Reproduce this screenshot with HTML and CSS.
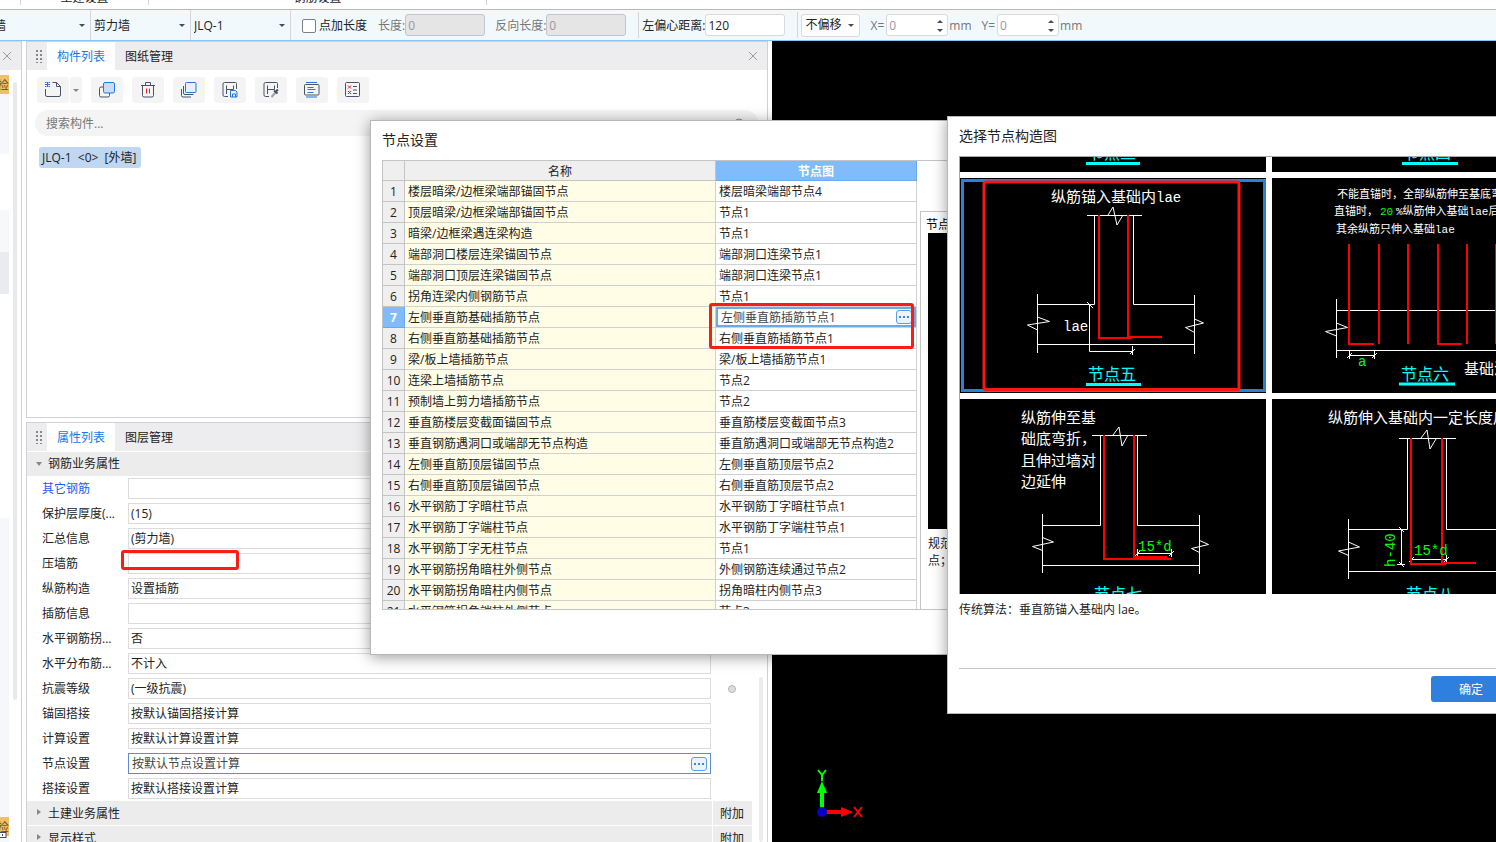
FILE: index.html
```html
<!DOCTYPE html>
<html lang="zh-CN">
<head>
<meta charset="utf-8">
<title>节点设置</title>
<link rel="stylesheet" href="styles.css">
</head>
<body>
<div class="app">
  <nav class="ribbon">
    <div class="ribbon-group ribbon-group-edge"></div>
    <div class="ribbon-group ribbon-group-civil">土建设置</div>
    <div class="ribbon-group ribbon-group-rebar">钢筋设置</div>
  </nav>

  <div class="toolbar">
    <span class="combo"><select aria-label="构件大类"><option>墙</option></select></span>
    <span class="combo"><select aria-label="构件类型"><option>剪力墙</option></select></span>
    <span class="combo"><select aria-label="构件"><option>JLQ-1</option></select></span>
    <label class="tick"><input type="checkbox">点加长度</label>
    <div class="field muted"><label for="len">长度:</label><input id="len" class="num" value="0" disabled></div>
    <div class="field muted"><label for="rlen">反向长度:</label><input id="rlen" class="num" value="0" disabled></div>
    <i class="sep"></i>
    <div class="field"><label for="ecc">左偏心距离:</label><input id="ecc" class="num" value="120"></div>
    <i class="sep"></i>
    <span class="combo combo-box"><select aria-label="偏移方式"><option>不偏移</option></select></span>
    <div class="field muted"><label for="ox">X=</label><span class="spin"><input id="ox" value="0"></span><span>mm</span></div>
    <div class="field muted"><label for="oy">Y=</label><span class="spin"><input id="oy" value="0"></span><span>mm</span></div>
  </div>

  <main class="work">
    <aside class="rail">
      <div class="rail-head"><button class="close" aria-label="关闭"><svg width="10" height="10" viewBox="0 0 10 10"><path d="M1 1l8 8M9 1l-8 8"/></svg></button></div>
      <div class="rail-body">
        <div class="rail-list">
          <div class="rail-top"><span class="badge">检</span></div>
          <div class="rail-gap"></div>
          <div class="rail-row"></div>
          <div class="rail-row rail-row-on"></div>
          <div class="rail-bottom"><span class="badge">检<svg width="8" height="8" viewBox="0 0 8 8"><rect x="-1" y="1.500" width="7" height="5" fill="#fff"/><path d="M2.500 3v2"/></svg></span></div>
        </div>
        <div class="rail-scroll"></div>
      </div>
    </aside>

    <div class="docks">
      <section class="panel">
        <header class="tabs">
          <i class="grip"></i>
          <button class="tab tab-on">构件列表</button>
          <button class="tab">图纸管理</button>
          <button class="close" aria-label="关闭"><svg width="10" height="10" viewBox="0 0 10 10"><path d="M1 1l8 8M9 1l-8 8"/></svg></button>
        </header>
        <div class="tools">
          <div class="split">
            <button class="tool" aria-label="新建"><svg class="ico" viewBox="0 0 18 18"><path d="M8.500 1.500h4l4 4v8.500a1.500 1.500 0 0 1-1.500 1.500H3A1.500 1.500 0 0 1 1.500 14V8M12.500 1.500v4h4"/><path class="blue" d="M1 1.500h1.500M4.500 1.500H6M2.500 3.500h2M1 5.500h1.500M4.500 5.500H6M3.500 1v5M1 3.500h5" stroke-width="1"/></svg></button>
            <button class="tool tool-drop" aria-label="更多新建"></button>
          </div>
          <button class="tool" aria-label="复制"><svg class="ico" viewBox="0 0 18 18"><rect x="1.500" y="6" width="10" height="10" rx="1.500"/><rect class="blue tint" x="5.500" y="1.500" width="11" height="10.500" rx="1.500"/></svg></button>
          <button class="tool" aria-label="删除"><svg class="ico" viewBox="0 0 18 18"><path d="M2 4.500h14M6.500 4.500v-3h5v3M3.500 4.500v10a1.500 1.500 0 0 0 1.500 1.500h8a1.500 1.500 0 0 0 1.500-1.500v-10"/><path class="red" d="M7.500 7.500v5M10.500 7.500v5"/></svg></button>
          <button class="tool" aria-label="层间复制"><svg class="ico" viewBox="0 0 18 18"><path d="M1.500 8v6.500A1.500 1.500 0 0 0 3 16h8M3.500 5v7a1.500 1.500 0 0 0 1.500 1.500h8.500"/><rect class="blue pale" x="5.500" y="1.500" width="10.500" height="10" rx="1"/></svg></button>
          <button class="tool" aria-label="存档"><svg class="ico" viewBox="0 0 18 18"><path d="M7 15.500H3.500A1.500 1.500 0 0 1 2 14V3a1.500 1.500 0 0 1 1.500-1.500h11a1 1 0 0 1 1 1V8M5.500 13V4.500M5.500 8.500h7M12.500 8.500v-4"/><path class="blue pale" d="M9.500 9.500h5l1.500 1.500v5H9.500zM11.500 16v-3h3v3"/></svg></button>
          <button class="tool" aria-label="提取"><svg class="ico" viewBox="0 0 18 18"><path d="M7 15.500H3.500A1.500 1.500 0 0 1 2 14V3a1.500 1.500 0 0 1 1.500-1.500h11a1 1 0 0 1 1 1V7M5.500 13V4.500M5.500 8.500h7M12.500 8.500v-4"/><path d="M9.500 16l4-4.500" stroke-width="2" stroke="#9aa1af"/><path d="M12 9.500l3.500 3M14 10.500l2-2" stroke-width="2"/></svg></button>
          <button class="tool" aria-label="添加前后缀"><svg class="ico" viewBox="0 0 18 18"><rect x="1.500" y="3.500" width="14.500" height="10.500" rx="1"/><path class="blue" d="M3 1.500h11M3 16h11M4.500 6.500h6M4.500 8.500h8M4.500 11.500h6"/></svg></button>
          <button class="tool" aria-label="检查"><svg class="ico" viewBox="0 0 18 18"><rect x="1.500" y="1.500" width="14" height="14" rx="1"/><path d="M9 5.500h4M9 9h4M9 12.500h4"/><path class="red" d="M4 4.500l3 3M7 4.500l-3 3M4 10l3 3M7 10l-3 3"/></svg></button>
        </div>
        <div class="search">
          <input type="search" placeholder="搜索构件..." aria-label="搜索构件">
          <svg class="ico ico-find" viewBox="0 0 18 18"><circle cx="9" cy="9" r="4"/><path d="M12 12l3 3"/></svg>
        </div>
        <ul class="items"><li class="item">JLQ-1  &lt;0&gt;  [外墙]</li></ul>
      </section>

      <section class="panel panel-props">
        <header class="tabs">
          <i class="grip"></i>
          <button class="tab tab-on">属性列表</button>
          <button class="tab">图层管理</button>
        </header>
        <div class="props">
          <button class="group group-full group-open">钢筋业务属性</button>
          <div class="prop prop-link"><label for="p1">其它钢筋</label><input id="p1"></div>
          <div class="prop"><label for="p2">保护层厚度(...</label><input id="p2" value="(15)"></div>
          <div class="prop"><label for="p3">汇总信息</label><input id="p3" value="(剪力墙)"></div>
          <div class="prop"><label for="p4">压墙筋</label><input id="p4"><i class="mark mark-prop"></i></div>
          <div class="prop"><label for="p5">纵筋构造</label><input id="p5" value="设置插筋"></div>
          <div class="prop"><label for="p6">插筋信息</label><input id="p6"></div>
          <div class="prop"><label for="p7">水平钢筋拐...</label><input id="p7" value="否"></div>
          <div class="prop"><label for="p8">水平分布筋...</label><input id="p8" value="不计入"></div>
          <div class="prop"><label for="p9">抗震等级</label><input id="p9" value="(一级抗震)"><input class="dot" type="radio" disabled aria-label="附加抗震等级"></div>
          <div class="prop"><label for="p10">锚固搭接</label><input id="p10" value="按默认锚固搭接计算"></div>
          <div class="prop"><label for="p11">计算设置</label><input id="p11" value="按默认计算设置计算"></div>
          <div class="prop prop-on"><label for="p12">节点设置</label><input id="p12" value="按默认节点设置计算"><button class="more" aria-label="编辑节点设置"></button></div>
          <div class="prop"><label for="p13">搭接设置</label><input id="p13" value="按默认搭接设置计算"></div>
          <div class="group-row"><button class="group">土建业务属性</button><span class="extra">附加</span></div>
          <div class="group-row"><button class="group">显示样式</button><span class="extra">附加</span></div>
          <i class="props-scroll"></i>
        </div>
      </section>
    </div>

    <section class="canvas">
      <svg class="axis" width="56" height="56" viewBox="0 0 56 56">
        <path d="M11 45V24" stroke="#0f0" stroke-width="4"/><path d="M11 14l5 12H6z" fill="#0f0"/>
        <path d="M11 45h20" stroke="red" stroke-width="4"/><path d="M42 45l-12 5V40z" fill="red"/>
        <circle cx="11" cy="45" r="5" fill="#0000c8"/>
        <path d="M7 3l4 5 4-5M11 8v6" stroke="#0f0" stroke-width="2" fill="none"/>
        <path d="M43 40l8 10M51 40l-8 10" stroke="red" stroke-width="2"/>
      </svg>
    </section>
  </main>

  <section class="dialog dialog-nodes" role="dialog" aria-labelledby="t1">
    <h2 class="dialog-title" id="t1">节点设置</h2>
    <div class="nodes">
      <div class="sheet">
        <table class="grid">
          <colgroup><col class="c-no"><col class="c-name"><col class="c-node"></colgroup>
          <thead><tr><th></th><th>名称</th><th class="on">节点图</th></tr></thead>
          <tbody>
            <tr><th>1</th><td>楼层暗梁/边框梁端部锚固节点</td><td>楼层暗梁端部节点4</td></tr>
            <tr><th>2</th><td>顶层暗梁/边框梁端部锚固节点</td><td>节点1</td></tr>
            <tr><th>3</th><td>暗梁/边框梁遇连梁构造</td><td>节点1</td></tr>
            <tr><th>4</th><td>端部洞口楼层连梁锚固节点</td><td>端部洞口连梁节点1</td></tr>
            <tr><th>5</th><td>端部洞口顶层连梁锚固节点</td><td>端部洞口连梁节点1</td></tr>
            <tr><th>6</th><td>拐角连梁内侧钢筋节点</td><td>节点1</td></tr>
            <tr><th class="on">7</th><td>左侧垂直筋基础插筋节点</td><td class="edit"><div class="edit-box"><input value="左侧垂直筋插筋节点1" aria-label="左侧垂直筋基础插筋节点"><button class="more" aria-label="选择节点构造图"></button></div></td></tr>
            <tr><th>8</th><td>右侧垂直筋基础插筋节点</td><td>右侧垂直筋插筋节点1</td></tr>
            <tr><th>9</th><td>梁/板上墙插筋节点</td><td>梁/板上墙插筋节点1</td></tr>
            <tr><th>10</th><td>连梁上墙插筋节点</td><td>节点2</td></tr>
            <tr><th>11</th><td>预制墙上剪力墙插筋节点</td><td>节点2</td></tr>
            <tr><th>12</th><td>垂直筋楼层变截面锚固节点</td><td>垂直筋楼层变截面节点3</td></tr>
            <tr><th>13</th><td>垂直钢筋遇洞口或端部无节点构造</td><td>垂直筋遇洞口或端部无节点构造2</td></tr>
            <tr><th>14</th><td>左侧垂直筋顶层锚固节点</td><td>左侧垂直筋顶层节点2</td></tr>
            <tr><th>15</th><td>右侧垂直筋顶层锚固节点</td><td>右侧垂直筋顶层节点2</td></tr>
            <tr><th>16</th><td>水平钢筋丁字暗柱节点</td><td>水平钢筋丁字暗柱节点1</td></tr>
            <tr><th>17</th><td>水平钢筋丁字端柱节点</td><td>水平钢筋丁字端柱节点1</td></tr>
            <tr><th>18</th><td>水平钢筋丁字无柱节点</td><td>节点1</td></tr>
            <tr><th>19</th><td>水平钢筋拐角暗柱外侧节点</td><td>外侧钢筋连续通过节点2</td></tr>
            <tr><th>20</th><td>水平钢筋拐角暗柱内侧节点</td><td>拐角暗柱内侧节点3</td></tr>
            <tr><th>21</th><td>水平钢筋拐角端柱外侧节点</td><td>节点3</td></tr>
          </tbody>
        </table>
      </div>
      <div class="preview">
        <h3>节点</h3>
        <div class="preview-pic"></div>
        <p>规范<br>点；</p>
      </div>
      <i class="mark mark-nodes"></i>
    </div>
  </section>

  <section class="dialog dialog-pick" role="dialog" aria-labelledby="t2">
    <h2 class="dialog-title" id="t2">选择节点构造图</h2>
    <div class="gallery">
      <svg class="thumb" viewBox="960 -43 306 215" preserveAspectRatio="xMinYMax slice">
        <text class="cap" x="1088" y="159">节点三</text><path class="cap-line" d="M1086 163.500h54"/>
      </svg>
      <svg class="thumb" viewBox="1272 -43 306 215" preserveAspectRatio="xMinYMax slice">
        <text class="cap" x="1403" y="159">节点四</text><path class="cap-line" d="M1402 163.500h56"/>
      </svg>

      <svg class="thumb" viewBox="960 178 306 215">
        <rect x="962.500" y="180.500" width="302" height="210" fill="none" stroke="#2d7fdc" stroke-width="3"/>
        <text class="note" x="1051" y="202">纵筋锚入基础内<tspan class="latin">lae</tspan></text>
        <path class="wall" d="M1087 215.500h55M1094.500 215v89.500h-57M1133.500 215v89.500h61M1037.500 294v59M1194.500 295v59M1037 344.500h157M1089.500 304v47.500h43M1132.500 346v9M1087 302l6 6M1130 354l5-5"/>
        <path class="wall" d="M1108 215l5-8 4 18 6-10M1037.500 317l12 4.500-22 3.500 10 5M1194.500 319l9 4-18 4.500 9 5"/>
        <path class="bar" d="M1099 215v123h33M1128 215v122h34"/>
        <text class="latin" x="1063" y="331">lae</text>
        <text class="cap" x="1088" y="380">节点五</text><path class="cap-line" d="M1086 384.500h55"/>
        <rect x="984" y="182" width="255" height="207.500" rx="2" fill="none" stroke="#f9170f" stroke-width="3"/>
      </svg>

      <svg class="thumb" viewBox="1272 178 306 215">
        <text class="small" x="1337" y="198">不能直锚时，全部纵筋伸至基底弯</text>
        <text class="small" x="1334" y="215">直锚时，</text><text class="small green" x="1380" y="215">20</text>
        <text class="small" x="1396" y="215">%纵筋伸入基础lae后</text>
        <text class="small" x="1336" y="233">其余纵筋只伸入基础lae</text>
        <path class="wall" d="M1336 310.500h242M1336.500 299v59M1336 350.500h242M1349 355.500h26M1349.500 351v8M1374.500 351v8M1347 358l5-5M1372 358l5-5M1336.500 323l11 4.500-22 4 11 4.500"/>
        <path class="bar" d="M1349 244v100h25M1379 244v100M1408 244v100M1438 244v100h24M1467 244v100M1496 244v100"/>
        <text class="latin green" x="1358" y="366">a</text>
        <text class="cap" x="1401" y="380">节点六</text><path class="cap-line" d="M1399 384h56"/>
        <text class="note" x="1464" y="374">基础深</text>
      </svg>

      <svg class="thumb" viewBox="960 399 306 215">
        <text class="note" x="1021" y="423">纵筋伸至基</text><text class="note" x="1021" y="444">础底弯折，</text>
        <text class="note" x="1021" y="466">且伸过墙对</text><text class="note" x="1021" y="487">边延伸</text>
        <path class="wall" d="M1092 435.500h55M1100.500 435v90.500h-58M1137.500 435v90.500h62M1042.500 514v59M1199.500 515v59M1042 565.500h157M1137 553.500h35M1137.500 549v8M1171.500 549v8M1135 556l5-5M1169 556l5-5"/>
        <path class="wall" d="M1113 435l6-8 3 19 6-11M1042.500 537.500l11 4.500-21 4.500 10 4M1199.500 540.500l9 4-17 4 8 4"/>
        <path class="bar" d="M1104 435v124h67M1134 435v122h33"/>
        <text class="latin green" x="1138" y="551">15*d</text>
        <text class="cap" x="1094" y="600">节点七</text>
      </svg>

      <svg class="thumb" viewBox="1272 399 306 215">
        <text class="note" x="1328" y="423">纵筋伸入基础内一定长度后</text>
        <path class="wall" d="M1399 438.500h57M1407.500 438v91.500h-59M1446.500 438v91.500h131M1348.500 519v60M1348 571.500h230M1401.500 529v36M1397 564.500h8M1399 527l5 5M1399 562l5 5M1411 559.500h35M1446.500 555v8M1409 562l5-5M1444 562l5-5"/>
        <path class="wall" d="M1421 438l6-8 3 19 6-10M1348.500 542l11 5-21 4 10 4.500"/>
        <path class="bar" d="M1411 438v126h35M1442 438v125h34"/>
        <text class="latin green" x="1414" y="555">15*d</text>
        <text class="latin green" transform="translate(1395 567) rotate(-90)">h-40</text>
        <text class="cap" x="1406" y="600">节点八</text>
      </svg>
    </div>
    <p class="pick-note">传统算法：垂直筋锚入基础内 lae。</p>
    <footer class="pick-foot"><button class="ok">确定</button></footer>
  </section>
</div>
</body>
</html>
```
FILE: styles.css
```css
* { box-sizing: border-box; }

body {
  margin: 0;
  font: 12px/16px "Open Sans", "Noto Sans CJK SC", sans-serif;
  color: #222;
  background: #fff;
}

button, input, select {
  margin: 0;
  padding: 0;
  border: 0;
  border-radius: 0;
  background: none;
  font: inherit;
  color: inherit;
  appearance: none;
  outline: none;
}

h2, h3, p, ul { margin: 0; padding: 0; font-weight: normal; list-style: none; }

.app {
  position: relative;
  display: flex;
  flex-direction: column;
  height: 100vh;
  overflow: hidden;
}

/* Ribbon */
.ribbon {
  display: flex;
  align-items: flex-end;
  flex: none;
  height: 9px;
  padding-bottom: 4px;
  overflow: hidden;
}
.ribbon-group { height: 16px; line-height: 18px; text-align: center; border-right: 1px solid #d4d6da; }
.ribbon-group-edge { width: 21px; }
.ribbon-group-civil { width: 128px; }
.ribbon-group-rebar { width: 338px; }

/* Toolbar */
.toolbar {
  display: flex;
  align-items: center;
  flex: none;
  height: 32px;
  padding-right: 16px;
  background: #f2f9fd;
  border-top: 1px solid #8cc3f8;
  border-bottom: 1px solid #8cc3f8;
}
.combo { position: relative; flex: none; width: 100px; height: 30px; border-right: 1px solid #d4d6da; }
.combo:first-child { margin-left: -9px; }
.combo select { width: 100%; height: 100%; padding: 2px 0 0 3px; }
.combo::after, .tool-drop::after {
  content: "";
  position: absolute;
  right: 5px;
  top: 14px;
  border: 3px solid transparent;
  border-top-color: #444b5c;
  border-bottom: 0;
}
.combo-box { width: 59px; height: 23px; margin-right: 10px; border: 1px solid #d7dade; border-radius: 3px; background: #fff; }
.combo-box select { padding-top: 0; }
.combo-box::after { top: 9px; }
.tick { display: flex; align-items: center; gap: 3px; margin: 0 11px; flex: none; padding-top: 1px; }
.tick input { width: 14px; height: 14px; border: 1px solid #7c7f85; border-radius: 2px; background: #fff; }
.field { display: flex; align-items: center; flex: none; margin-right: 10px; }
.field label, .field > span:last-child { padding-top: 2px; }
.num { width: 80px; height: 22px; padding: 1px 0 0 2px; border: 1px solid #d7dade; border-radius: 3px; background: #fff; }
.num:disabled { background: #e5e5e5; border-color: #bfc6d2; color: #999; }
.muted { color: #777; }
.sep { width: 1px; height: 26px; margin: 0 3px 0 2px; background: #d4d6da; }
.spin { position: relative; width: 62px; height: 22px; margin: 0 1px 0 2px; border: 1px solid #d7dade; border-radius: 3px; background: #fff; color: #999; }
.spin input { width: 40px; height: 20px; padding: 1px 0 0 2px; }
.spin::before, .spin::after {
  content: "";
  position: absolute;
  right: 4px;
  top: 5px;
  border: 3px solid transparent;
  border-bottom-color: #444b5c;
  border-top: 0;
}
.spin::after { top: 14px; border-top: 3px solid #444b5c; border-bottom: 0; }

/* Work area */
.work { display: flex; flex: 1; min-height: 0; }

.close { display: grid; place-items: center; width: 14px; height: 14px; }
.close svg { fill: none; stroke: #9a9a9e; }

.rail { display: flex; flex-direction: column; width: 22px; margin-right: 4px; border-right: 1px solid #d0d1d6; }
.rail-head { display: flex; align-items: center; height: 29px; background: #ededf0; border-top: 1px solid #d9d9dc; }
.rail-body { display: flex; flex: 1; min-height: 0; }
.rail-list { display: flex; flex-direction: column; width: 9px; overflow: hidden; }
.rail-top { height: 84px; padding-top: 5px; background: #f5f7fa; }
.rail-gap { height: 56px; }
.rail-row { height: 42px; background: #f7f8fa; }
.rail-row-on { margin-bottom: 224px; background: #e9ebf0; }
.rail-bottom { flex: 1; padding-top: 299px; background: #f5f7fa; }
.badge { position: relative; display: flex; justify-content: flex-end; height: 19px; line-height: 21px; background: #f0c068; color: #6b4a12; }
.badge svg { position: absolute; left: 0; bottom: -3px; stroke: #444b5c; }
.rail-scroll { width: 4px; height: 618px; margin: 12px 0 0 4px; border-radius: 2px; background: #e9e9eb; }

.docks { display: flex; flex-direction: column; gap: 4px; width: 742px; margin-right: 4px; }
.panel { display: flex; flex-direction: column; height: 377px; border: 1px solid #d0d1d6; }
.panel-props { flex: 1; height: auto; min-height: 0; border-bottom: 0; }
.tabs { display: flex; align-items: center; flex: none; height: 28px; padding-right: 7px; background: #ededf0; }
.tabs .close { margin-left: auto; }
.grip {
  width: 8px;
  height: 14px;
  margin: 0 4px 0 8px;
  background: radial-gradient(circle, #85878c 1px, transparent 1px) 0 0 / 4px 4px;
}
.tab { height: 28px; padding: 2px 10px 0; }
.tab-on { background: #fff; color: #1678ee; }

.tools { display: flex; gap: 9px; padding: 7px 10px; }
.split { display: flex; gap: 1px; }
.tool { position: relative; display: grid; place-items: center; width: 32px; height: 26px; border-radius: 3px; background: #f4f4f4; }
.tool-drop { width: 12px; }
.tool-drop::after { right: 3px; top: 12px; border-top-color: #85878c; }
.ico { width: 18px; height: 18px; fill: none; stroke: #4a5266; }
.ico .blue { stroke: #2277e0; }
.ico .red { stroke: #e22; }
.ico .tint { fill: #c8dcf7; }
.ico .pale { fill: #e6f1ff; }
.ico-find { stroke: #888; }

.search { display: flex; align-items: center; height: 26px; margin: 0 9px 0 8px; padding: 0 10px 0 11px; border-radius: 13px; background: #f4f4f4; color: #777; }
.search input { flex: 1; height: 26px; padding-top: 1px; }
.search input::placeholder { color: #777; }
.items { padding: 11px 12px; }
.item { width: max-content; height: 21px; padding: 0 5px 0 3px; line-height: 21px; white-space: pre; border-radius: 3px; background: #bfd7f1; }

/* Properties */
.props { position: relative; flex: 1; min-height: 0; padding-top: 1px; overflow: hidden; }
.group { position: relative; display: block; flex: 1; height: 24px; padding: 2px 0 0 21px; text-align: left; background: #ececec; }
.group-full { width: 725px; padding-top: 0; }
.group::before {
  content: "";
  position: absolute;
  left: 10px;
  top: 8px;
  border: 3px solid transparent;
  border-left: 4px solid #888;
  border-right: 0;
}
.group-open::before { left: 9px; top: 10px; border: 3px solid transparent; border-top: 4px solid #888; border-bottom: 0; }
.group-row { display: flex; gap: 1px; width: 725px; margin-bottom: 1px; }
.extra { width: 39px; height: 24px; padding-right: 1px; line-height: 26px; text-align: center; background: #ececec; }
.prop { position: relative; display: flex; align-items: center; height: 25px; padding-left: 15px; }
.prop label { width: 86px; }
.prop input { width: 583px; height: 21px; padding: 0 0 1px 2px; border: 1px solid #dcdcdc; background: #fff; }
.prop-link label { color: #1a5cff; }
.prop-on input { border-color: #5f8bd6; padding-left: 3px; color: #444; }
.prop .dot { width: 8px; height: 8px; margin-left: 17px; padding: 0; border: 1px solid #b4b6ba; border-radius: 50%; background: #dcdcdc; }
.props-scroll { position: absolute; right: 4px; top: 226px; bottom: 0; width: 4px; border-radius: 2px; background: #ececec; }

.more {
  flex: none;
  width: 16px;
  height: 14px;
  border: 1px solid #58a0ea;
  border-radius: 3px;
  background: radial-gradient(circle, #3b87e0 1px, transparent 1px) 50% 50% / 4px 12px repeat-x #edf3fb;
}
.prop .more { margin-left: -20px; }

.mark { position: absolute; border: 3px solid #fb1c14; border-radius: 3px; pointer-events: none; }
.mark-prop { left: 94px; top: -1px; width: 118px; height: 20px; }
.mark-nodes { left: 327px; top: 142px; width: 205px; height: 46px; }

/* Model canvas */
.canvas { position: relative; flex: 1; min-width: 0; background: #000; }
.axis { position: absolute; left: 39px; bottom: 19px; }

/* Dialogs */
.dialog { position: absolute; display: flex; flex-direction: column; border: 1px solid #b8b8b8; background: #fff; box-shadow: 0 2px 14px rgba(0, 0, 0, .4); }
.dialog-title { font-size: 14px; line-height: 20px; }
.dialog-nodes { left: 370px; top: 120px; width: 680px; height: 535px; padding: 9px 0 44px 11px; }
.nodes { position: relative; display: flex; flex: 1; min-height: 0; margin-top: 10px; border-top: 1px solid #c4c4c4; border-bottom: 1px solid #c4c4c4; }
.sheet { flex: none; width: 535px; overflow: hidden; border-left: 1px solid #c4c4c4; }
.grid { width: 534px; table-layout: fixed; border-collapse: separate; border-spacing: 0; }
.c-no { width: 22px; }
.c-name { width: 311px; }
.c-node { width: 201px; }
.grid th, .grid td {
  height: 21px;
  padding: 2px 0 0;
  line-height: 18px;
  font-weight: normal;
  white-space: nowrap;
  border-right: 1px solid #d0d0d0;
  border-bottom: 1px solid #d0d0d0;
}
.grid thead th { height: 20px; line-height: 17px; }
.grid th { background: #efefef; border-color: #c4c4c4; text-align: center; }
.grid th.on { background: #80bbfb; border-color: #6ba9e8; color: #fff; font-weight: bold; }
.grid td { padding-left: 3px; }
.grid td:nth-child(2) { background: #fffde6; }
.grid td.edit { padding: 0; }
.edit-box { display: flex; align-items: center; height: 20px; padding-right: 2px; border: 2px solid #6ba9e8; }
.edit-box input { flex: 1; min-width: 0; height: 16px; padding: 1px 0 0 3px; color: #444; }

.preview { width: 120px; margin: 50px 0 0 3px; padding: 5px 7px; border: 1px solid #c4c4c4; border-bottom: 0; }
.preview h3 { margin-left: -2px; font-size: 12px; color: #000; }
.preview-pic { height: 296px; margin-bottom: 6px; background: #000; }
.preview p { line-height: 17px; }

.dialog-pick { left: 947px; top: 116px; right: -27px; height: 598px; padding: 9px 11px 11px; }
.gallery {
  display: grid;
  grid-template-columns: 306px 306px;
  grid-template-rows: 15px 215px 215px;
  gap: 6px;
  height: 438px;
  margin-top: 10px;
  overflow: hidden;
  border-top: 1px solid #a8a8a8;
  border-left: 1px solid #a8a8a8;
}
.thumb { display: block; width: 100%; height: 100%; background: #000; }
.thumb text { fill: #fff; font-family: "Liberation Mono", "Noto Sans CJK SC", monospace; }
.thumb .note { font-size: 15px; }
.thumb .small { font-size: 11px; }
.thumb .latin { font-size: 14px; }
.thumb .cap { font-size: 16px; fill: #0ff; }
.thumb .green { fill: #0f0; }
.cap-line { stroke: #0ff; stroke-width: 3; }
.wall { fill: none; stroke: #fff; }
.bar { fill: none; stroke: red; stroke-width: 2; }
.pick-note { margin-top: 8px; }
.pick-foot { display: flex; justify-content: flex-end; margin-top: auto; padding-top: 7px; border-top: 1px solid #c4c4c4; }
.ok { width: 80px; height: 26px; padding-top: 2px; border-radius: 3px; background: #2d7fe0; color: #fff; }
```
